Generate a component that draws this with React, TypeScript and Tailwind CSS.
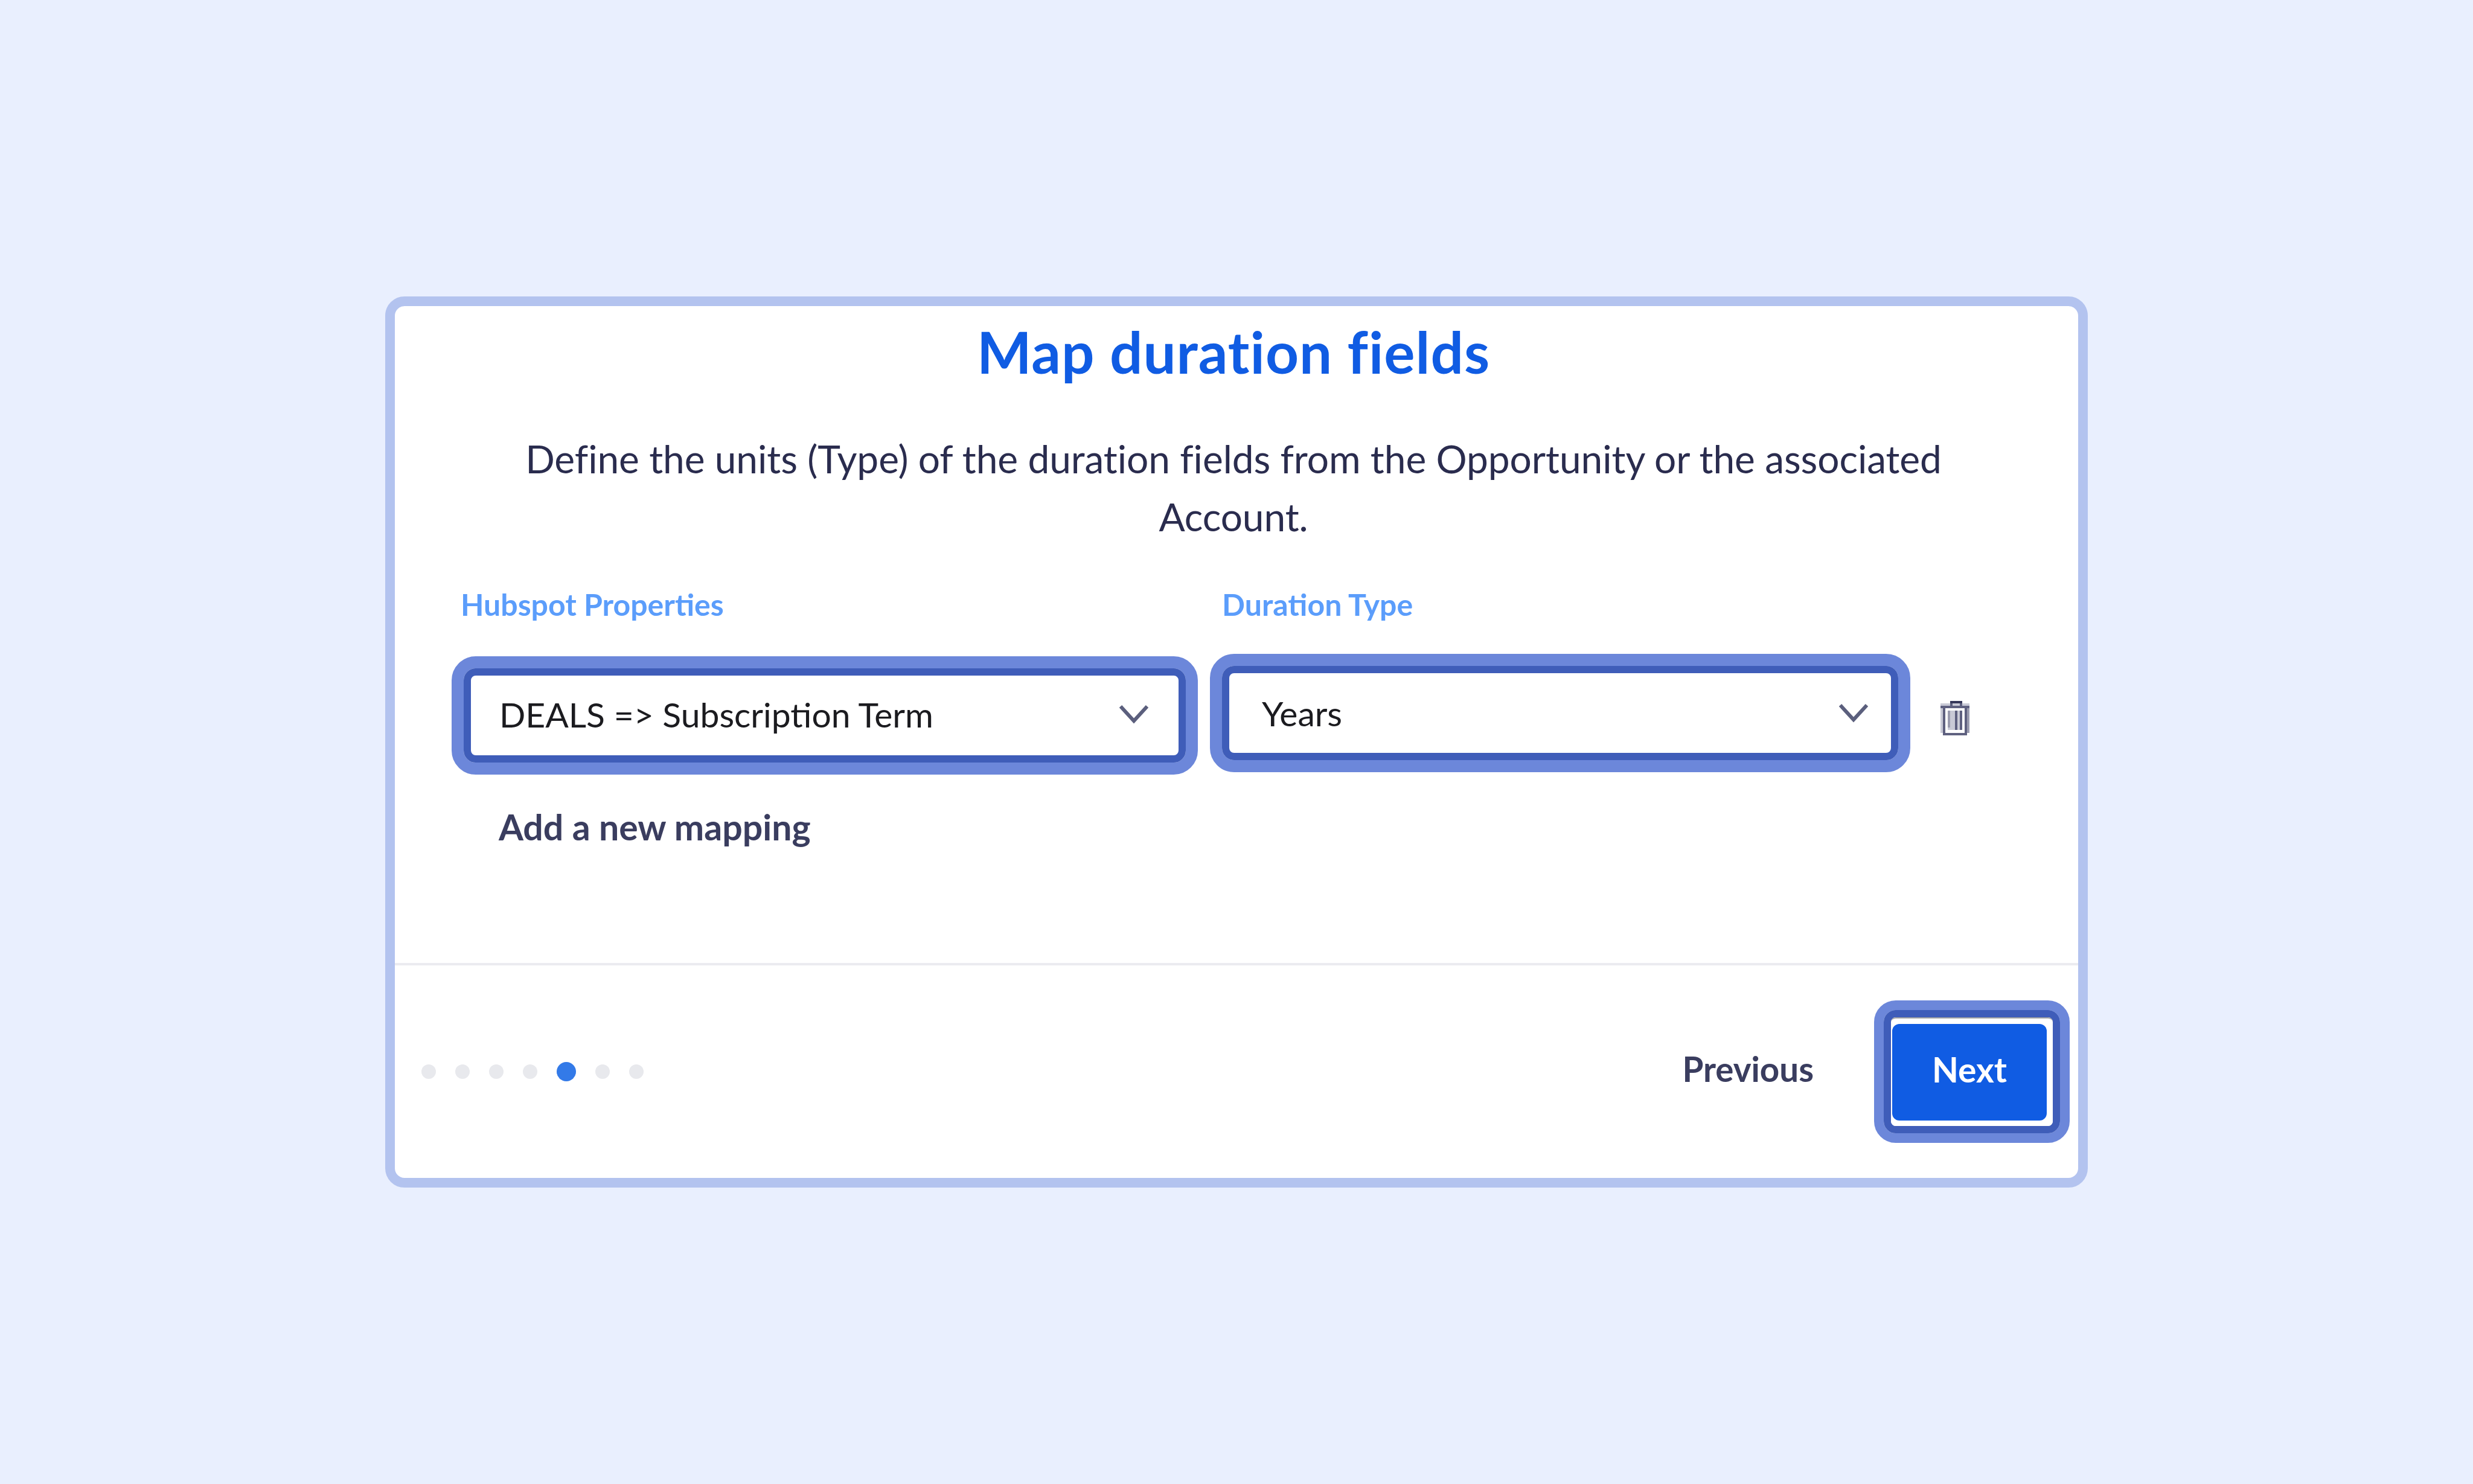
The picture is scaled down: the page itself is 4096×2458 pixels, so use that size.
const font = { fontFamily: 'Lato, "Open Sans", sans-serif' }

function Chevron() {
  return (
    <svg width="48" height="32" viewBox="0 0 48 32" fill="none" className="shrink-0">
      <path d="M2 3 L24 27 L46 3" stroke="#5b5f7d" strokeWidth="6" />
    </svg>
  )
}

function TrashIcon() {
  return (
    <svg width="48" height="57" viewBox="0 0 48 57" className="shrink-0" shapeRendering="crispEdges">
      <rect x="0" y="4" width="48" height="4" fill="#c9cad6" />
      <rect x="0" y="8" width="4" height="45" fill="#c9cad6" />
      <rect x="44" y="8" width="4" height="45" fill="#9a9bae" />
      <rect x="0" y="8" width="48" height="4" fill="#5f6180" />
      <rect x="16" y="0" width="20" height="4" fill="#35375a" />
      <rect x="16" y="4" width="4" height="4" fill="#5f6180" />
      <rect x="32" y="4" width="4" height="4" fill="#5f6180" />
      <rect x="20" y="4" width="12" height="4" fill="#c9cad6" />
      <rect x="4" y="12" width="4" height="41" fill="#5f6180" />
      <rect x="40" y="12" width="4" height="41" fill="#5f6180" />
      <rect x="4" y="53" width="40" height="4" fill="#5f6180" />
      <rect x="12" y="16" width="24" height="32" fill="#c9cad6" />
      <rect x="12" y="16" width="4" height="28" fill="#9a9bae" />
      <rect x="24" y="16" width="4" height="32" fill="#5f6180" />
      <rect x="32" y="16" width="4" height="32" fill="#5f6180" />
    </svg>
  )
}

function SelectBox({ label, className, innerClass }: { label: string; className: string; innerClass: string }) {
  return (
    <div className={`${className} h-[196px] shrink-0 rounded-[40px] border-[20px] border-[#6c87da]`}>
      <div className={`${innerClass} h-full rounded-[20px] border-[12px] border-[#3f5db9] bg-white flex items-center justify-between`}>
        <span className="text-[57px] leading-none text-[#1b1b1f]" style={font}>{label}</span>
        <Chevron />
      </div>
    </div>
  )
}

export default function App() {
  const dots = [0, 1, 2, 3, 4, 5, 6]

  return (
    <div className="w-[4096px] h-[2458px] bg-[#e9effe] flex items-center justify-center" style={font}>
      <div className="w-[2820px] h-[1476px] flex flex-col rounded-[32px] border-[16px] border-[#b3c3ef] bg-white">
        <div className="h-[1088px] shrink-0 flex flex-col">
          <h1 className="mt-[27px] mr-[10px] text-center text-[96px] leading-[96px] font-bold tracking-[1px] text-[#105ce3]">
            Map duration fields
          </h1>
          <p className="mt-[82px] mx-auto w-[2500px] -translate-x-[5px] text-center text-[64px] leading-[96px] tracking-[-0.06px] text-[#2a2c4e]">
            Define the units (Type) of the duration fields from the Opportunity or the associated Account.
          </p>

          <div className="mt-[65px] pl-[109px] flex text-[50px] leading-[64px] font-bold text-[#5b9dfb]">
            <div className="w-[1261px]">Hubspot Properties</div>
            <div>Duration Type</div>
          </div>

          <div className="mt-[50px] pl-[94px] flex items-start gap-[20px]">
            <SelectBox label="DEALS => Subscription Term" className="w-[1236px] mt-[4px]" innerClass="pl-[47px] pr-[50px] pb-[4px]" />
            <SelectBox label="Years" className="w-[1160px]" innerClass="pl-[54px] pr-[38px]" />
            <div className="ml-[30px] mt-[78px]">
              <TrashIcon />
            </div>
          </div>

          <div className="mt-[39px] pl-[172px] text-[59px] leading-[96px] font-bold text-[#3a3d5f]">
            Add a new mapping
          </div>
        </div>

        <div className="flex-1 border-t-[4px] border-[#ebebf0] pl-[44px] pr-[14px] flex items-center justify-between">
          <div className="flex items-center">
            {dots.map((d) =>
              d === 4 ? (
                <div key={d} className="w-[32px] h-[32px] rounded-full bg-[#337ae8] mx-[32px]" />
              ) : (
                <div key={d} className={`w-[24px] h-[24px] rounded-full bg-[#e8e9ed] ${d === 5 || d === 3 ? '' : d === 6 ? 'ml-[32px]' : 'mr-[32px]'}`} />
              )
            )}
          </div>

          <div className="flex items-center gap-[100px]">
            <span className="pb-[9px] text-[56.5px] leading-none font-bold text-[#3a3d5f]">Previous</span>
            <div className="w-[324px] h-[236px] rounded-[36px] border-[16px] border-[#6c87da]">
              <div className="h-full rounded-[20px] border-[12px] border-[#3f5db9]">
                <div className="h-full rounded-[8px] border-t-2 border-[#a3a3a3] bg-white pl-[2px] pt-[9px] pr-[10px] pb-[9px]">
                  <div className="h-full rounded-[12px] bg-[#105ce3] pb-[9px] flex items-center justify-center text-[57px] leading-none font-bold text-white">
                    Next
                  </div>
                </div>
              </div>
            </div>
          </div>
        </div>
      </div>
    </div>
  )
}
